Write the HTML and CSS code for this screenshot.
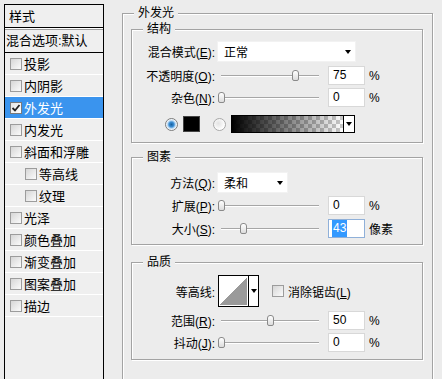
FILE: index.html
```html
<!DOCTYPE html>
<html lang="zh-CN">
<head>
  <meta charset="UTF-8">
  <meta name="viewport" content="width=device-width, initial-scale=1.0">
  <title>图层样式 - 外发光</title>
  <link rel="stylesheet" href="styles.css">
</head>
<body>
  <div class="style-list">
    <div class="list-head">样式</div>
    <div class="list-blend">混合选项:默认</div>
    <div class="list-item"><span class="check"></span>投影</div>
    <div class="list-item"><span class="check"></span>内阴影</div>
    <div class="list-item selected">
      <span class="check">
        <svg width="10" height="10" viewBox="0 0 10 10"><path d="M1.5 5 L4 7.5 L8.5 2" fill="none" stroke="#222" stroke-width="1.8"/></svg>
      </span>外发光
    </div>
    <div class="list-item"><span class="check"></span>内发光</div>
    <div class="list-item"><span class="check"></span>斜面和浮雕</div>
    <div class="list-item sub"><span class="check"></span>等高线</div>
    <div class="list-item sub"><span class="check"></span>纹理</div>
    <div class="list-item"><span class="check"></span>光泽</div>
    <div class="list-item"><span class="check"></span>颜色叠加</div>
    <div class="list-item"><span class="check"></span>渐变叠加</div>
    <div class="list-item"><span class="check"></span>图案叠加</div>
    <div class="list-item"><span class="check"></span>描边</div>
  </div>

  <div class="group outer">
    <div class="group-title">外发光</div>
    <div class="outer-body">

      <!-- 结构 -->
      <div class="group structure">
        <div class="group-title">结构</div>
        <div class="group-body">
          <div class="row tall">
            <span class="label">混合模式(<u>E</u>):</span>
            <div class="select wide">正常<span class="arrow"></span></div>
          </div>
          <div class="row gap4">
            <span class="label">不透明度(<u>O</u>):</span>
            <div class="slider"><div class="track"><span class="thumb" style="left: 75%"></span></div></div>
            <span class="num">75</span><span class="unit">%</span>
          </div>
          <div class="row gap3">
            <span class="label">杂色(<u>N</u>):</span>
            <div class="slider"><div class="track"><span class="thumb" style="left: 0%"></span></div></div>
            <span class="num">0</span><span class="unit">%</span>
          </div>
          <div class="row color-row">
            <span class="radio on"></span>
            <span class="swatch"></span>
            <span class="radio"></span>
            <div class="gradient"><span class="grad-fill"></span><span class="grad-arrow"><span class="arrow"></span></span></div>
          </div>
        </div>
      </div>

      <!-- 图素 -->
      <div class="group elements">
        <div class="group-title">图素</div>
        <div class="group-body">
          <div class="row tall">
            <span class="label">方法(<u>Q</u>):</span>
            <div class="select short">柔和<span class="arrow"></span></div>
          </div>
          <div class="row gap3">
            <span class="label">扩展(<u>P</u>):</span>
            <div class="slider"><div class="track"><span class="thumb" style="left: 0%"></span></div></div>
            <span class="num">0</span><span class="unit">%</span>
          </div>
          <div class="row gap4">
            <span class="label">大小(<u>S</u>):</span>
            <div class="slider"><div class="track"><span class="thumb" style="left: 22%"></span></div></div>
            <span class="num focused"><span class="sel">43</span></span><span class="unit">像素</span>
          </div>
        </div>
      </div>

      <!-- 品质 -->
      <div class="group quality">
        <div class="group-title">品质</div>
        <div class="group-body">
          <div class="row contour-row">
            <span class="label">等高线:</span>
            <div class="contour"><span class="contour-curve"></span><span class="contour-arrow"><span class="arrow"></span></span></div>
            <span class="check small"></span>
            <span class="check-text">消除锯齿(<u>L</u>)</span>
          </div>
          <div class="row gap4">
            <span class="label">范围(<u>R</u>):</span>
            <div class="slider"><div class="track"><span class="thumb" style="left: 50%"></span></div></div>
            <span class="num">50</span><span class="unit">%</span>
          </div>
          <div class="row gap3">
            <span class="label">抖动(<u>J</u>):</span>
            <div class="slider"><div class="track"><span class="thumb" style="left: 0%"></span></div></div>
            <span class="num">0</span><span class="unit">%</span>
          </div>
        </div>
      </div>

    </div>
  </div>
</body>
</html>
```

FILE: styles.css
```css
* {
  margin: 0;
  padding: 0;
  box-sizing: border-box;
}
html, body {
  height: 379px;
  overflow: hidden;
}
body {
  display: flex;
  align-items: flex-start;
  background: #ececec;
  color: #000;
  font-family: "Liberation Sans", "Noto Sans CJK SC", sans-serif;
  font-size: 12px;
}
u {
  text-decoration: underline;
  text-underline-offset: 1px;
}

/* left list */
.style-list {
  width: 100px;
  height: 375px;
  margin: 4px 18px 0 4px;
  border: 1px solid #000;
  border-bottom: none;
  background: #efefef;
  font-size: 13px;
}
.list-head {
  height: 23px;
  line-height: 23px;
  padding-left: 4px;
  border-bottom: 1px solid #000;
  box-shadow: 0 1px 0 #fff, 0 2px 0 #a0a0a0;
  margin-bottom: 2px;
}
.list-blend {
  height: 23px;
  line-height: 22px;
  padding-left: 1px;
  border-bottom: 1px solid #000;
  white-space: nowrap;
}
.list-item {
  display: flex;
  align-items: center;
  height: 22px;
  padding-left: 5px;
  border-bottom: 1px solid #fff;
  white-space: nowrap;
}
.list-item.sub {
  padding-left: 20px;
}
.list-item.selected {
  background: #3a94ee;
  color: #fff;
}
.check {
  display: flex;
  align-items: center;
  justify-content: center;
  width: 12px;
  height: 12px;
  margin-right: 2px;
  border: 1px solid #9c9c9c;
  background: linear-gradient(135deg, #d6d6d6, #fbfbfb);
}
.selected .check {
  border-color: #7a7a7a;
  background: linear-gradient(135deg, #e4e4e4, #fff);
}

/* group boxes */
.group {
  border: 1px solid #a3a3a3;
  box-shadow: 1px 1px 0 #fff, inset 1px 1px 0 #fff;
}
.group-title {
  width: fit-content;
  height: 14px;
  line-height: 14px;
  margin: -8px 0 -6px 11px;
  padding: 0 4px;
  background: #ececec;
  white-space: nowrap;
}
.outer {
  width: 311px;
  height: 366px;
  margin-top: 13px;
  border-bottom: none;
}
.outer-body {
  padding: 15px 9px 0 8px;
}
.structure .group-body {
  padding: 11px 0 8px;
}
.elements {
  margin-top: 14px;
}
.elements .group-body {
  padding: 14px 0 6px;
}
.quality {
  margin-top: 17px;
}
.quality .group-body {
  padding: 12px 0 7px;
}

/* rows */
.row {
  display: flex;
  align-items: center;
  height: 19px;
  white-space: nowrap;
}
.row.tall {
  height: 21px;
}
.row.gap3 {
  margin-top: 3px;
}
.row.gap4 {
  margin-top: 4px;
}
.label {
  width: 83px;
  margin-right: 2px;
  text-align: right;
}

.select {
  display: flex;
  align-items: center;
  justify-content: space-between;
  height: 21px;
  padding: 0 4px 0 6px;
  background: #fff;
  border: 1px solid #f2f2f2;
}
.select.wide {
  width: 139px;
}
.select.short {
  width: 71px;
}
.arrow {
  width: 0;
  height: 0;
  border-left: 3px solid transparent;
  border-right: 3px solid transparent;
  border-top: 4px solid #000;
}

.slider {
  width: 104px;
  height: 19px;
  margin-right: 7px;
}
.track {
  position: relative;
  height: 100%;
  margin: 0 2px 0 4px;
}
.track::before {
  content: "";
  position: absolute;
  left: 0;
  right: 0;
  top: 9px;
  height: 1px;
  background: #a6a6a6;
  box-shadow: 0 1px 0 #fff;
}
.thumb {
  position: absolute;
  top: 4px;
  width: 7px;
  height: 11px;
  margin-left: -3px;
  border: 1px solid #8a8a8a;
  border-radius: 3px 3px 2px 2px;
  background: linear-gradient(#fff, #dcdcdc);
}

.num {
  width: 37px;
  height: 19px;
  line-height: 17px;
  padding-left: 4px;
  border: 1px solid #d8d8d8;
  background: #fff;
}
.num.focused {
  border-color: #8fb0d9;
  padding-left: 3px;
}
.sel {
  display: inline-block;
  padding: 0 1px;
  background: #3399ff;
  color: #fff;
}
.unit {
  margin-left: 4px;
}

/* colour row */
.color-row {
  height: 20px;
  margin-top: 7px;
  padding-left: 33px;
}
.radio {
  width: 13px;
  height: 13px;
  border: 1px solid #a8a8a8;
  border-radius: 50%;
  background: radial-gradient(circle at 40% 40%, #e2e2e2, #fff 70%);
  margin-left: 13px;
}
.radio.on {
  margin-left: 0;
  border-color: #7b7b7b;
  background: radial-gradient(circle, #175f9e 0, #3b8fd6 2.5px, #bcd9f2 4px, #fff 5.5px);
}
.swatch {
  width: 17px;
  height: 16px;
  margin-left: 5px;
  background: #000;
  border: 1px solid #444;
}
.gradient {
  display: flex;
  width: 124px;
  height: 18px;
  margin-left: 5px;
  border: 1px solid #000;
}
.grad-fill {
  flex: 1;
  background:
    linear-gradient(to right, #000, rgba(0, 0, 0, 0)),
    conic-gradient(#c8c8c8 25%, #fff 0 50%, #c8c8c8 0 75%, #fff 0) 0 0 / 8px 8px;
}
.grad-arrow {
  display: flex;
  align-items: center;
  justify-content: center;
  width: 11px;
  border-left: 1px solid #000;
  background: #fff;
}

/* contour row */
.contour-row {
  height: 32px;
}
.contour {
  display: flex;
  width: 41px;
  height: 32px;
  margin-left: 1px;
  border: 1px solid #000;
  background: #fff;
}
.contour-curve {
  flex: 1;
  margin: 1px;
  background: linear-gradient(to top left, #9a9a9a 50%, #fff 50%);
}
.contour-arrow {
  display: flex;
  align-items: center;
  justify-content: center;
  width: 10px;
  border-left: 1px solid #000;
  background: #fff;
}
.check.small {
  margin-left: 13px;
  margin-right: 4px;
}
```
